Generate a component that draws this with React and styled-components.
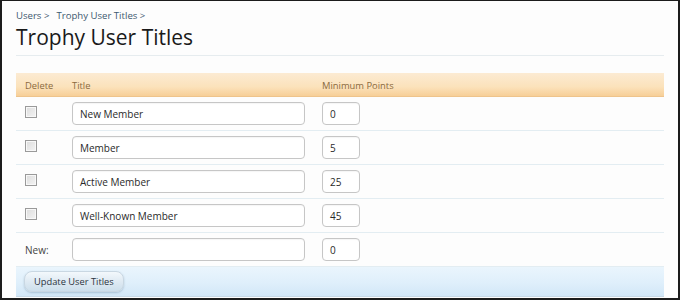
import React from "react";
import styled, { createGlobalStyle } from "styled-components";

const GlobalStyle = createGlobalStyle`
  * {
    margin: 0;
    padding: 0;
    box-sizing: border-box;
  }

  body, html {
    background-color: #ffffff;
    font-family: "Open Sans", "DejaVu Sans", sans-serif;
  }
`;

const Frame = styled.div`
  width: 680px;
  height: 300px;
  border: 2px solid #1c1c1c;
  border-top-width: 1px;
  background: #fdfdfd;
  padding: 9px 14px 0 14px;
  overflow: hidden;
`;

const Breadcrumb = styled.div`
  display: flex;
  gap: 7px;
  font-size: 9.6px;
  color: #3e5a70;
  line-height: 12px;
`;

const Heading = styled.h1`
  font-size: 21px;
  font-weight: normal;
  color: #1a1a1a;
  line-height: 28px;
  margin-top: 1px;
  padding-bottom: 4px;
  border-bottom: 1px solid #e6ecef;
`;

const Table = styled.div`
  margin-top: 17px;
  display: grid;
  grid-template-columns: 56px 250px 1fr;
`;

const HeadCell = styled.div`
  height: 24px;
  display: flex;
  align-items: center;
  padding-top: 1px;
  padding-left: ${(p) => p.$pad ?? 9}px;
  font-size: 9.4px;
  color: #8b6a3e;
  background: linear-gradient(180deg, #fcebd3 0%, #fbe2bb 60%, #f7cf98 100%);
  border-bottom: 1px solid #eec48c;
`;

const Cell = styled.div`
  height: 34px;
  display: flex;
  align-items: center;
  border-bottom: 1px solid #e3edf2;
  padding-left: ${(p) => p.$pad ?? 0}px;
  font-size: 10px;
  color: #333;
`;

const Check = styled.span`
  display: inline-block;
  width: 12px;
  height: 12px;
  margin-top: -4px;
  border: 1px solid #9a9a9a;
  background: linear-gradient(135deg, #dcdcdc 0%, #f4f4f4 100%);
  box-shadow: inset 0 0 0 1px #f8f8f8;
`;

const TextInput = styled.div`
  width: ${(p) => p.$width}px;
  height: 23px;
  border: 1px solid #c6c6c6;
  border-radius: 4px;
  background: #ffffff;
  display: flex;
  align-items: center;
  padding-left: 7px;
  font-size: 10px;
  color: #2a2a2a;
  box-shadow: inset 0 1px 1px rgba(0, 0, 0, 0.04);
`;

const NewLabel = styled.span`
  font-size: 10px;
  color: #444;
`;

const Footer = styled.div`
  grid-column: 1 / -1;
  height: 30px;
  display: flex;
  align-items: center;
  padding-left: 8px;
  background: linear-gradient(180deg, #eaf5fd 0%, #dfeffb 55%, #d2e7f7 100%);
  border-bottom: 1px solid #c7d9e6;
`;

const Button = styled.button`
  height: 21px;
  padding: 0 9px;
  border: 1px solid #c9d7e2;
  border-radius: 8px;
  background: linear-gradient(180deg, #f3f8fc 0%, #dfeaf3 50%, #cddfec 100%);
  box-shadow: 0 1px 2px rgba(90, 120, 150, 0.35);
  font-family: "Open Sans", "DejaVu Sans", sans-serif;
  font-size: 9.3px;
  color: #2c3440;
`;

const titles = [
  { title: "New Member", points: "0" },
  { title: "Member", points: "5" },
  { title: "Active Member", points: "25" },
  { title: "Well-Known Member", points: "45" },
];

const App = () => {
  return (
    <>
      <GlobalStyle />
      <Frame>
        <Breadcrumb>
          <span>Users &gt;</span>
          <span>Trophy User Titles &gt;</span>
        </Breadcrumb>
        <Heading>Trophy User Titles</Heading>

        <Table>
          <HeadCell>Delete</HeadCell>
          <HeadCell $pad={0}>Title</HeadCell>
          <HeadCell $pad={0}>Minimum Points</HeadCell>

          {titles.map((t) => (
            <React.Fragment key={t.title}>
              <Cell $pad={9}>
                <Check />
              </Cell>
              <Cell>
                <TextInput $width={233}>{t.title}</TextInput>
              </Cell>
              <Cell>
                <TextInput $width={38}>{t.points}</TextInput>
              </Cell>
            </React.Fragment>
          ))}

          <Cell $pad={9}>
            <NewLabel>New:</NewLabel>
          </Cell>
          <Cell>
            <TextInput $width={233} />
          </Cell>
          <Cell>
            <TextInput $width={38}>0</TextInput>
          </Cell>

          <Footer>
            <Button>Update User Titles</Button>
          </Footer>
        </Table>
      </Frame>
    </>
  );
};

export default App;
